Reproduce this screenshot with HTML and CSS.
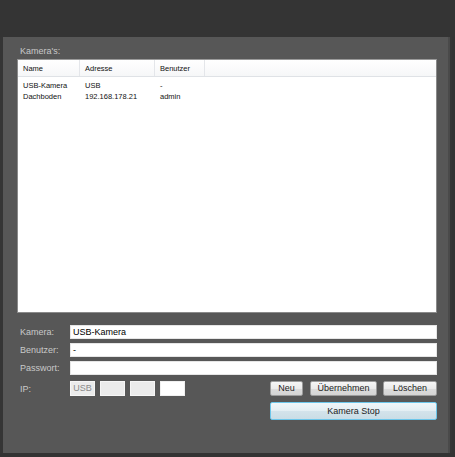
FILE: index.html
```html
<!DOCTYPE html>
<html>
<head>
<meta charset="utf-8">
<link rel="stylesheet" href="styles.css">
</head>
<body>
<div class="topbar"></div>
<div class="frame">
  <div class="panel">
    <div class="caption">Kamera's:</div>
    <div class="list">
      <div class="lhead">
        <div class="hcell c1">Name</div>
        <div class="hcell c2">Adresse</div>
        <div class="hcell c3">Benutzer</div>
        <div class="hcell c4"></div>
      </div>
      <div class="lbody">
        <div class="lrow"><span class="c1">USB-Kamera</span><span class="c2">USB</span><span class="c3">-</span></div>
        <div class="lrow"><span class="c1">Dachboden</span><span class="c2">192.168.178.21</span><span class="c3">admin</span></div>
      </div>
    </div>
    <div class="form">
      <div class="frow"><label class="flabel">Kamera:</label><div class="input">USB-Kamera</div></div>
      <div class="frow"><label class="flabel">Benutzer:</label><div class="input">-</div></div>
      <div class="frow"><label class="flabel">Passwort:</label><div class="input"></div></div>
      <div class="frow iprow">
        <label class="flabel">IP:</label>
        <div class="ipbox dis">USB</div>
        <div class="ipbox dis"></div>
        <div class="ipbox dis"></div>
        <div class="ipbox"></div>
        <div class="spacer"></div>
        <div class="btn b-neu">Neu</div>
        <div class="btn b-ueb">Übernehmen</div>
        <div class="btn b-los">Löschen</div>
      </div>
      <div class="frow stoprow">
        <div class="btn b-stop">Kamera Stop</div>
      </div>
    </div>
  </div>
</div>
</body>
</html>
```
FILE: styles.css
```css
html, body {
  margin: 0;
  padding: 0;
}
body {
  width: 455px;
  height: 457px;
  background: #333333;
  font-family: "Liberation Sans", Arial, sans-serif;
  overflow: hidden;
}
.topbar {
  height: 37px;
  background: #343434;
}
.frame {
  padding-left: 3px;
  width: 449px;
  background: #353535;
}
.panel {
  width: 447px;
  height: 416px;
  background: #575757;
  border-right: 2px solid #4a4a4a;
  box-sizing: border-box;
  padding: 7px 0 0 14px;
  display: flex;
  flex-direction: column;
}
.caption {
  color: #c9c9c9;
  font-size: 9px;
  line-height: 15px;
  padding-left: 3px;
}
.list {
  width: 420px;
  height: 254px;
  background: #ffffff;
  box-sizing: border-box;
  border: 1px solid #8a8a8a;
  border-top-color: #9a9a9a;
}
.lhead {
  display: flex;
  height: 16px;
  background: linear-gradient(#ffffff, #f6f7f8);
  border-bottom: 1px solid #dfe2e6;
  font-size: 7.5px;
  color: #111;
}
.hcell {
  display: flex;
  align-items: center;
  box-sizing: border-box;
  padding-left: 5px;
  border-right: 1px solid #e4e6ea;
}
.hcell.c4 {
  flex: 1;
  border-right: none;
}
.c1 { width: 62px; }
.c2 { width: 75px; }
.c3 { width: 50px; }
.lbody {
  padding-top: 3px;
}
.lrow {
  display: flex;
  height: 11px;
  line-height: 11px;
  font-size: 7.5px;
  color: #111;
}
.lrow span {
  box-sizing: border-box;
  padding-left: 5px;
}
.form {
  display: flex;
  flex-direction: column;
  gap: 4px;
  margin-top: 12px;
  width: 420px;
}
.frow {
  display: flex;
  align-items: center;
  height: 14px;
}
.flabel {
  width: 53px;
  box-sizing: border-box;
  padding-left: 3px;
  color: #c9c9c9;
  font-size: 9px;
}
.input {
  flex: 1;
  height: 14px;
  background: #ffffff;
  box-sizing: border-box;
  border: 1px solid #e6e6e6;
  font-size: 9px;
  line-height: 12px;
  padding-left: 2px;
  color: #000;
}
.iprow {
  margin-top: 2px;
  height: 15px;
}
.ipbox {
  width: 25px;
  height: 15px;
  box-sizing: border-box;
  background: #ffffff;
  border: 1px solid #f0f0f0;
  margin-right: 5px;
  font-size: 9px;
  line-height: 13px;
  text-align: center;
  color: #8a8a8a;
}
.ipbox.dis {
  background: #ebebeb;
  border-color: #f6f6f6;
}
.spacer {
  flex: 1;
}
.btn {
  box-sizing: border-box;
  height: 15px;
  border: 1px solid #9c9c9c;
  border-radius: 2px;
  background: linear-gradient(#f6f6f6 0%, #ebebeb 50%, #dcdcdc 51%, #d4d4d4 100%);
  font-size: 9px;
  line-height: 13px;
  text-align: center;
  color: #222;
}
.b-neu { width: 33px; margin-right: 7px; }
.b-ueb { width: 67px; margin-right: 6px; }
.b-los { width: 54px; }
.stoprow {
  margin-top: 2px;
  height: 18px;
  justify-content: flex-end;
}
.b-stop {
  width: 167px;
  height: 18px;
  line-height: 16px;
  border: 1px solid #6cc6ea;
  background: linear-gradient(#f0f6f9 0%, #e3eef3 50%, #d3e3eb 51%, #cadde6 100%);
}
```
